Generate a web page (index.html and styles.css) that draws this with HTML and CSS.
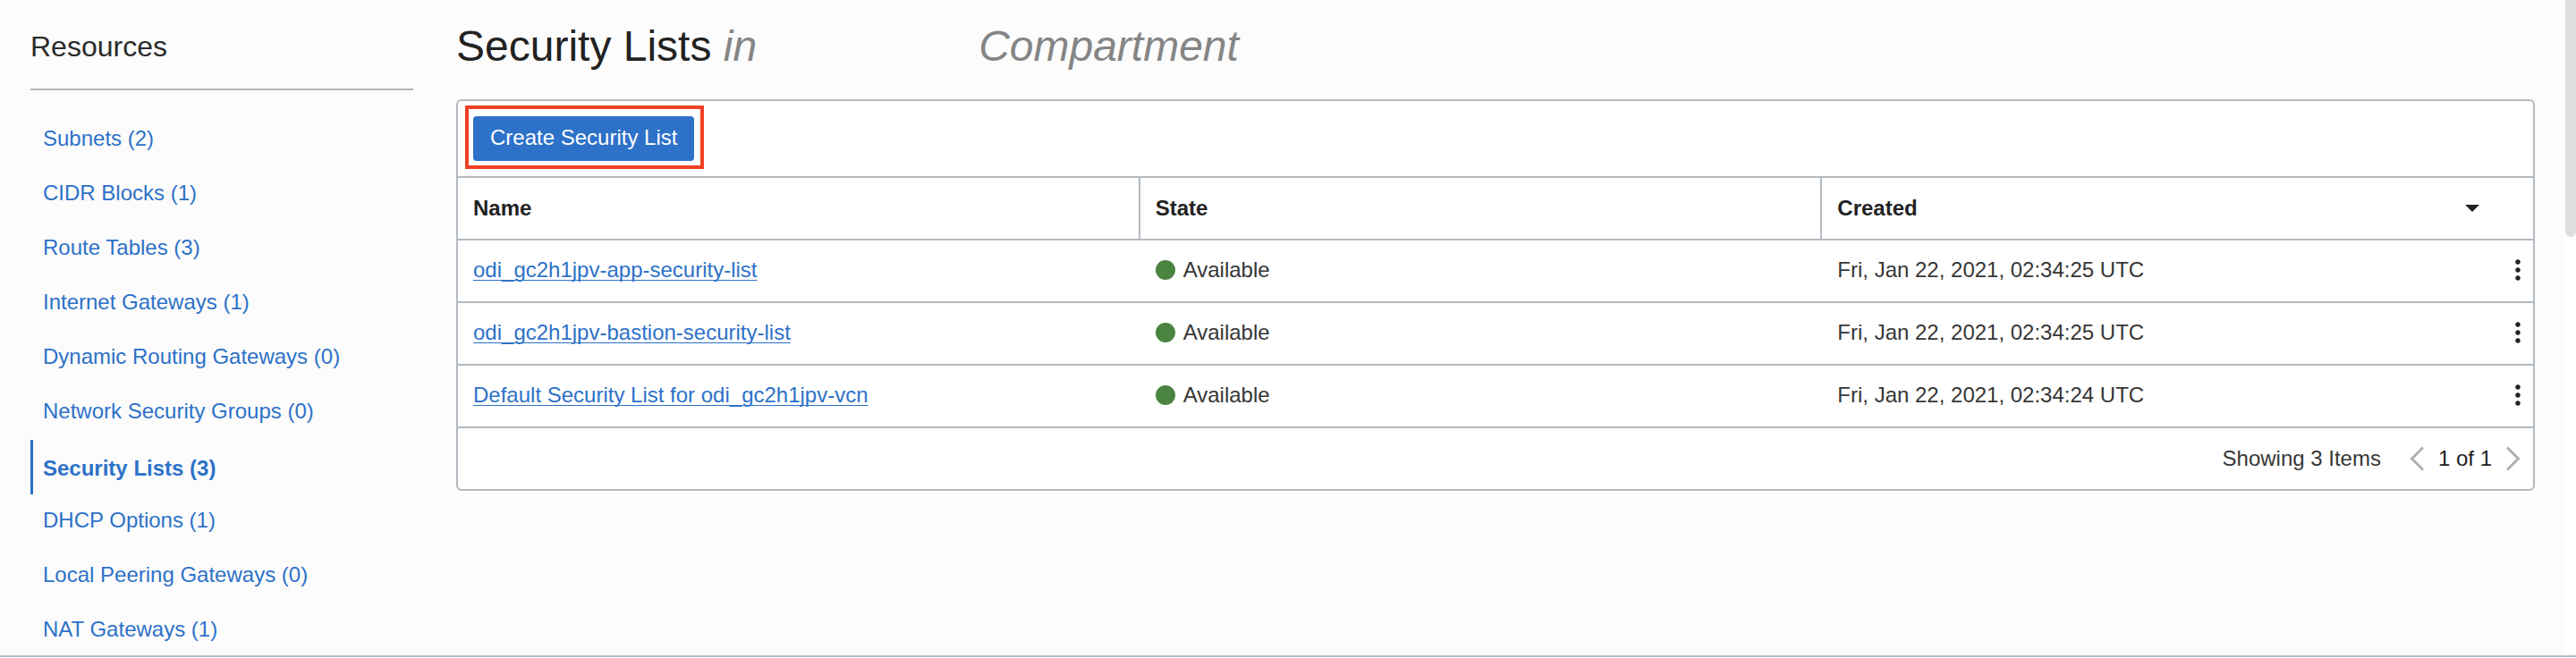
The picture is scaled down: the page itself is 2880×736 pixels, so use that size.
FILE: index.html
```html
<!DOCTYPE html>
<html lang="en">
<head>
<meta charset="utf-8">
<title>Security Lists</title>
<link rel="stylesheet" href="styles.css">
</head>
<body>
<div class="page">
  <aside class="sidebar">
    <h2 class="sidebar-title">Resources</h2>
    <nav class="nav" aria-label="Resources">
      <a class="nav-item" href="#subnets">Subnets (2)</a>
      <a class="nav-item" href="#cidr">CIDR Blocks (1)</a>
      <a class="nav-item" href="#routes">Route Tables (3)</a>
      <a class="nav-item" href="#internet">Internet Gateways (1)</a>
      <a class="nav-item" href="#dynamic">Dynamic Routing Gateways (0)</a>
      <a class="nav-item" href="#groups">Network Security Groups (0)</a>
      <a class="nav-item active" href="#lists" aria-current="page">Security Lists (3)</a>
      <a class="nav-item" href="#dhcp">DHCP Options (1)</a>
      <a class="nav-item" href="#peering">Local Peering Gateways (0)</a>
      <a class="nav-item" href="#nat">NAT Gateways (1)</a>
    </nav>
  </aside>
  <main class="main">
    <h1 class="title">Security Lists <em class="scope">in</em><em class="scope scope-kind">Compartment</em></h1>
    <section class="panel">
      <div class="toolbar">
        <div class="highlight"><button class="create" type="button">Create Security List</button></div>
      </div>
      <table class="table">
        <colgroup><col><col><col><col class="col-actions"></colgroup>
        <thead>
          <tr>
            <th scope="col">Name</th>
            <th scope="col">State</th>
            <th scope="col" colspan="2">
              <div class="sortable">Created
                <button class="sort" type="button" aria-label="Sort by created"><svg width="16" height="8" viewBox="0 0 16 8"><path d="M0 0h16L8 8z" fill="#222"/></svg></button>
              </div>
            </th>
          </tr>
        </thead>
        <tbody>
          <tr>
            <td><a class="link" href="#app">odi_gc2h1jpv-app-security-list</a></td>
            <td><span class="state">Available</span></td>
            <td>Fri, Jan 22, 2021, 02:34:25 UTC</td>
            <td class="actions"><button class="more" type="button" aria-label="Actions"><svg width="6" height="24" viewBox="0 0 6 24" fill="#222"><circle cx="3" cy="3" r="2.7"/><circle cx="3" cy="12" r="2.7"/><circle cx="3" cy="21" r="2.7"/></svg></button></td>
          </tr>
          <tr>
            <td><a class="link" href="#bastion">odi_gc2h1jpv-bastion-security-list</a></td>
            <td><span class="state">Available</span></td>
            <td>Fri, Jan 22, 2021, 02:34:25 UTC</td>
            <td class="actions"><button class="more" type="button" aria-label="Actions"><svg width="6" height="24" viewBox="0 0 6 24" fill="#222"><circle cx="3" cy="3" r="2.7"/><circle cx="3" cy="12" r="2.7"/><circle cx="3" cy="21" r="2.7"/></svg></button></td>
          </tr>
          <tr>
            <td><a class="link" href="#default">Default Security List for odi_gc2h1jpv-vcn</a></td>
            <td><span class="state">Available</span></td>
            <td>Fri, Jan 22, 2021, 02:34:24 UTC</td>
            <td class="actions"><button class="more" type="button" aria-label="Actions"><svg width="6" height="24" viewBox="0 0 6 24" fill="#222"><circle cx="3" cy="3" r="2.7"/><circle cx="3" cy="12" r="2.7"/><circle cx="3" cy="21" r="2.7"/></svg></button></td>
          </tr>
        </tbody>
      </table>
      <footer class="footer">
        <span>Showing 3 Items</span>
        <div class="pager">
          <button class="step" type="button" aria-label="Previous page"><svg width="16" height="28" viewBox="0 0 16 28"><path d="M15 1.500L2.500 14L15 26.500" fill="none" stroke="#b0b0b0" stroke-width="3"/></svg></button>
          <span class="page-count">1 of 1</span>
          <button class="step" type="button" aria-label="Next page"><svg width="16" height="28" viewBox="0 0 16 28"><path d="M1 1.500L13.500 14L1 26.500" fill="none" stroke="#b0b0b0" stroke-width="3"/></svg></button>
        </div>
      </footer>
    </section>
  </main>
  <div class="scroll-track"><div class="scroll-thumb"></div></div>
</div>
</body>
</html>
```

FILE: styles.css
```css
* { box-sizing: border-box; }

body {
  margin: 0;
  background: #fff;
  color: #363636;
  font: 24px/28px "Liberation Sans", Arial, sans-serif;
}

button {
  padding: 0;
  border: 0;
  background: none;
  color: inherit;
  font: inherit;
  cursor: pointer;
}

svg { display: block; }

.page {
  display: grid;
  grid-template-columns: 462px 1fr 12px;
  height: calc(100vh - 1px);
  overflow: hidden;
  border-bottom: 2px solid #b4bac1;
  background: #fcfcfc;
}

.sidebar { padding: 32px 0 0 34px; }

.sidebar-title {
  margin: 0;
  padding-bottom: 27px;
  border-bottom: 2px solid #b1b9bf;
  color: #2b2b2b;
  font-size: 32px;
  line-height: 40px;
  font-weight: 300;
}

.nav {
  display: flex;
  flex-direction: column;
  padding-top: 25px;
}

.nav-item {
  padding: 15px 0 18px 14px;
  color: #2d71c8;
  text-decoration: none;
}

.nav-item.active {
  padding: 18px 0 15px 11px;
  border-left: 3px solid #2d71c8;
  font-weight: 700;
}

.main { padding: 24px 34px 0 48px; }

.title {
  margin: 0 0 31px;
  color: #222;
  font-size: 48px;
  line-height: 56px;
  font-weight: 400;
}

.scope { color: #858585; }

.scope-kind { margin-left: 248px; }

.panel {
  border: 2px solid #b4bac1;
  border-radius: 6px;
  background: #fff;
}

.toolbar {
  display: flex;
  padding: 5px 8px 8px;
}

.highlight {
  padding: 8px 7px 5px 5px;
  border: 4px solid #ef4123;
}

.create {
  display: block;
  padding: 10px 19px 12px;
  border-radius: 4px;
  background: #2d71c8;
  color: #fff;
}

.table {
  width: 100%;
  table-layout: fixed;
  border-collapse: separate;
  border-spacing: 0;
}

.col-actions { width: 32px; }

th,
td {
  height: 70px;
  padding: 0 17px 2px;
  border-top: 2px solid #b4bac1;
  text-align: left;
}

th {
  padding-bottom: 0;
  color: #222;
}

th:not(:last-child) { border-right: 2px solid #b4bac1; }

.sortable {
  display: flex;
  align-items: center;
  justify-content: space-between;
  padding-right: 43px;
}

.link {
  color: #2d71c8;
  text-decoration-thickness: 1px;
  text-decoration-skip-ink: none;
  text-underline-offset: 3px;
}

.state {
  display: flex;
  align-items: center;
  gap: 9px;
}

.state::before {
  content: "";
  width: 22px;
  height: 22px;
  border-radius: 50%;
  background: #4a8440;
}

td.actions { padding: 0 14px 2px 0; }

.more {
  display: block;
  margin-left: auto;
}

.footer {
  display: flex;
  align-items: center;
  justify-content: flex-end;
  gap: 32px;
  height: 70px;
  padding-right: 14px;
  border-top: 2px solid #b4bac1;
}

.pager {
  display: flex;
  align-items: center;
  gap: 16px;
}

.page-count { color: #222; }

.scroll-track { background: #fff; }

.scroll-thumb {
  height: 36%;
  border-radius: 0 0 6px 6px;
  background: #dfdfde;
}
```
